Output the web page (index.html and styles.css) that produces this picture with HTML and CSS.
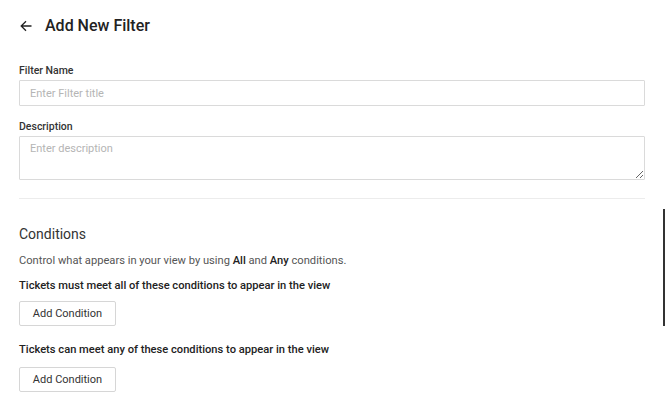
FILE: index.html
```html
<!DOCTYPE html>
<html>
<head>
	<meta name="viewport" content="width=device-width, initial-scale=1">
	<link rel="stylesheet" href="styles.css">
</head>
<body>
	<div class="page">
		<header class="header">
			<svg class="back" width="12" height="12" viewBox="0 0 12 12">
				<path d="M11.5 6H1.2M6 1.2L1.2 6L6 10.8" fill="none" stroke="#222" stroke-width="1.3"/>
			</svg>
			<h1 class="title">Add New Filter</h1>
		</header>

		<label class="label" for="filter_name">Filter Name</label>
		<input class="field" id="filter_name" type="text" placeholder="Enter Filter title">

		<label class="label label--desc" for="filter_desc">Description</label>
		<textarea class="field field--area" id="filter_desc" placeholder="Enter description"></textarea>

		<hr class="divider">

		<h2 class="section_title">Conditions</h2>
		<p class="hint">Control what appears in your view by using <b>All</b> and <b>Any</b> conditions.</p>

		<p class="rule rule--all">Tickets must meet all of these conditions to appear in the view</p>
		<button class="btn btn--all">Add Condition</button>

		<p class="rule rule--any">Tickets can meet any of these conditions to appear in the view</p>
		<button class="btn btn--any">Add Condition</button>
	</div>
	<div class="edge_bar"></div>
</body>
</html>
```

FILE: styles.css
```css
html, body {
	margin:0;
	padding:0;
	background:#fff;
}

body {
	font-family: Roboto, "Liberation Sans", sans-serif;
	color:#222;
	overflow:hidden;
}

.page {
	display:flex;
	flex-direction: column;
	align-items: flex-start;
	padding:0 20px 0 19px;
}

.header {
	display:flex;
	align-items:center;
	height:52px;
	width:100%;
}

.back {
	margin-left:1px;
	margin-right:13px;
}

.title {
	margin:0;
	font-size:16px;
	line-height:20px;
	font-weight:500;
	color:#222;
}

.label {
	display:block;
	margin-top:12px;
	margin-bottom:3px;
	font-size:10.5px;
	line-height:13px;
	font-weight:500;
	color:#333;
}

.label--desc {
	margin-top:14px;
}

.field {
	box-sizing:border-box;
	width:100%;
	height:26px;
	margin:0;
	padding:0 10px;
	border:1px solid #dadada;
	border-radius:1px;
	font-family: Roboto, "Liberation Sans", sans-serif;
	font-size:11px;
	color:#333;
	outline:none;
}

.field::placeholder {
	color:#b5b5b5;
}

.field--area {
	height:44px;
	padding:5px 10px;
	resize:vertical;
}

.divider {
	width:100%;
	margin:18px 0 0 0;
	border:0;
	border-top:1px solid #ececec;
}

.section_title {
	margin:27px 0 0 0;
	font-size:14px;
	line-height:17px;
	font-weight:400;
	color:#333;
}

.hint {
	margin:11px 0 0 0;
	font-size:11.15px;
	line-height:13px;
	color:#555;
}

.hint b {
	font-weight:500;
	color:#222;
}

.rule {
	margin:12px 0 0 0;
	font-size:11.15px;
	line-height:13px;
	font-weight:500;
	color:#222;
}

.rule--any {
	margin-top:17px;
}

.btn {
	box-sizing:border-box;
	width:97px;
	height:25px;
	margin-top:9px;
	padding:0;
	background:#fff;
	border:1px solid #d6d6d6;
	border-radius:2px;
	font-family: Roboto, "Liberation Sans", sans-serif;
	font-size:11px;
	color:#333;
	cursor:pointer;
}

.btn--any {
	margin-top:11px;
}

.edge_bar {
	position:absolute;
	top:209px;
	right:0;
	width:2px;
	height:117px;
	background:#333;
}
```
